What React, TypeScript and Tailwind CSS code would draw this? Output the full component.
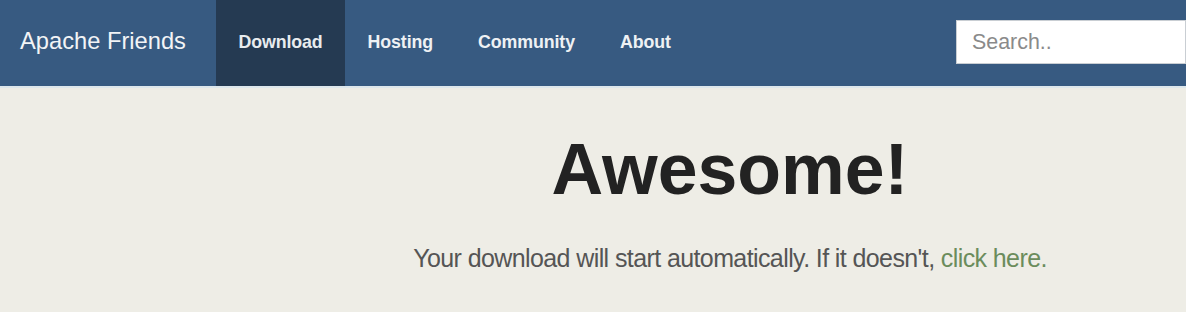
export default function App() {
  const links = ["Download", "Hosting", "Community", "About"];
  return (
    <div className="min-h-[312px] w-full bg-[#eeede6]" style={{ fontFamily: '"Liberation Sans", Arial, sans-serif' }}>
      <nav className="flex h-[88px] items-stretch border-b-2 border-[#dde7ec] bg-[#375a81] text-white">
        <div className="flex items-center pb-[2px] pl-[20px] pr-[30px] text-[23.7px] text-[#f2f4f6]">Apache Friends</div>
        {links.map((l, i) => (
          <a
            key={l}
            href="#"
            className={
              "flex items-center px-[22.5px] pb-[2px] text-[17.8px] font-bold tracking-[-0.1px] " +
              (i === 0 ? "bg-[#253a52] text-[#e8ecef]" : "text-[#eef1f4]")
            }
          >
            {l}
          </a>
        ))}
        <div className="ml-auto flex items-center pb-[2px]">
          <div className="flex h-[44px] w-[230px] items-center border border-[#c9ced3] bg-white pl-[15px] text-[21.4px] text-[#8a8a8a]">
            Search..
          </div>
        </div>
      </nav>
      <main className="pl-[274px] pt-[46px] text-center">
        <h1 className="text-[71.6px] font-bold leading-none text-[#222222]">Awesome!</h1>
        <p className="mt-[37px] text-[25px] leading-[1.2] tracking-[-0.6px] text-[#555555]">
          Your download will start automatically. If it doesn't,{" "}
          <a href="#" className="text-[#6b8c5c]">click here.</a>
        </p>
      </main>
    </div>
  );
}
